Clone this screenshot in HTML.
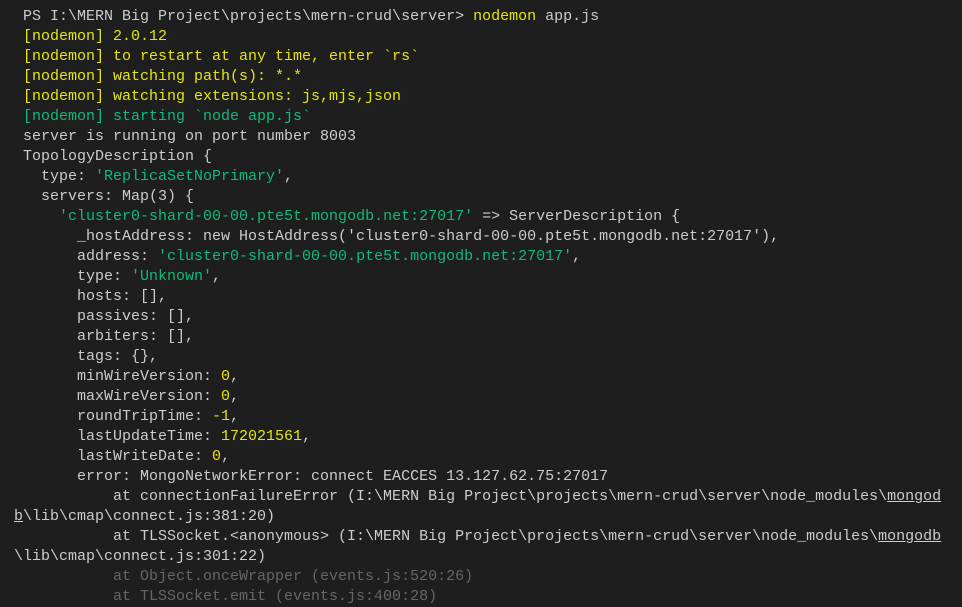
<!DOCTYPE html>
<html><head><meta charset="utf-8"><style>
html,body{margin:0;padding:0;background:#1e1e1e;width:962px;height:605px;overflow:hidden}
pre{margin:0;position:absolute;left:14px;top:7px;font-family:"Liberation Mono",monospace;font-size:15px;line-height:20px;color:#cccccc;letter-spacing:0}
.y{color:#e5e510}.g{color:#0dbc79}.d{color:#666666}u{text-decoration:underline}
</style></head><body>
<pre> PS I:\MERN Big Project\projects\mern-crud\server&gt; <span class="y">nodemon</span> app.js
<span class="y"> [nodemon] 2.0.12
 [nodemon] to restart at any time, enter `rs`
 [nodemon] watching path(s): *.*
 [nodemon] watching extensions: js,mjs,json</span>
<span class="g"> [nodemon] starting `node app.js`</span>
 server is running on port number 8003
 TopologyDescription {
   type: <span class="g">'ReplicaSetNoPrimary'</span>,
   servers: Map(3) {
     <span class="g">'cluster0-shard-00-00.pte5t.mongodb.net:27017'</span> =&gt; ServerDescription {
       _hostAddress: new HostAddress('cluster0-shard-00-00.pte5t.mongodb.net:27017'),
       address: <span class="g">'cluster0-shard-00-00.pte5t.mongodb.net:27017'</span>,
       type: <span class="g">'Unknown'</span>,
       hosts: [],
       passives: [],
       arbiters: [],
       tags: {},
       minWireVersion: <span class="y">0</span>,
       maxWireVersion: <span class="y">0</span>,
       roundTripTime: <span class="y">-1</span>,
       lastUpdateTime: <span class="y">172021561</span>,
       lastWriteDate: <span class="y">0</span>,
       error: MongoNetworkError: connect EACCES 13.127.62.75:27017
           at connectionFailureError (I:\MERN Big Project\projects\mern-crud\server\node_modules\<u>mongod</u>
<u>b</u>\lib\cmap\connect.js:381:20)
           at TLSSocket.&lt;anonymous&gt; (I:\MERN Big Project\projects\mern-crud\server\node_modules\<u>mongodb</u>
\lib\cmap\connect.js:301:22)
<span class="d">           at Object.onceWrapper (events.js:520:26)
           at TLSSocket.emit (events.js:400:28)</span></pre>
</body></html>
